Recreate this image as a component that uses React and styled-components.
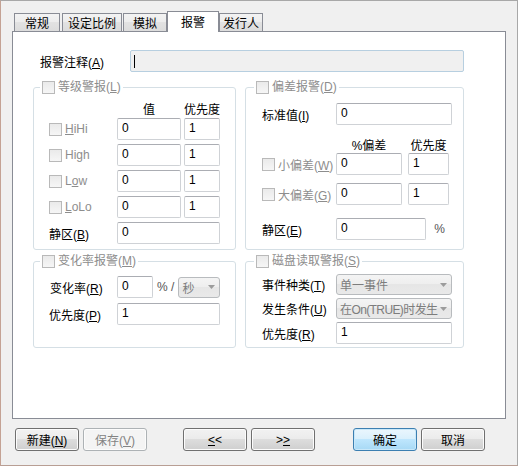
import React from 'react';
import styled, { createGlobalStyle } from 'styled-components';

const Global = createGlobalStyle`
  html, body { margin: 0; padding: 0; background: #f0f0f0; }
  body {
    font-family: "Liberation Sans", "Noto Sans CJK SC", sans-serif;
    font-size: 12px;
    color: #000;
  }
  #root { width: 518px; height: 466px; }
`;

const Window = styled.div`
  box-sizing: border-box;
  width: 518px;
  height: 466px;
  border: 1px solid #a8a8a8;
  border-left-color: #c4a294;
  border-bottom-color: #b89e94;
  background: #f0f0f0;
  padding: 10px 11px 0 11px;
  display: flex;
  flex-direction: column;
`;

const TabStrip = styled.div`
  display: flex;
  align-items: flex-end;
  height: 20px;
  padding-left: 2px;
  position: relative;
  z-index: 1;
`;

const Tab = styled.div`
  box-sizing: border-box;
  width: ${p => p.$w}px;
  margin-right: ${p => p.$mr || 0}px;
  height: ${p => (p.$active ? 21 : 18)}px;
  margin-bottom: ${p => (p.$active ? -1 : 0)}px;
  border: 1px solid #898c95;
  border-bottom: none;
  background: ${p =>
    p.$active ? '#ffffff' : 'linear-gradient(#f3f3f3 0%, #ececec 50%, #e2e2e2 50%, #dcdcdc 100%)'};
  display: flex;
  align-items: center;
  justify-content: center;
  padding-bottom: ${p => (p.$active ? 2 : 0)}px;
  white-space: nowrap;
`;

const Panel = styled.div`
  box-sizing: border-box;
  height: 388px;
  flex: none;
  border: 1px solid #898c95;
  background: #ffffff;
  padding: 18px 0 0 20px;
`;

const CommentRow = styled.div`
  display: flex;
  align-items: center;
  height: 22px;
  margin-left: 7px;
`;

const CommentLabel = styled.div`
  width: 90px;
  white-space: nowrap;
`;

const CommentBox = styled.div`
  box-sizing: border-box;
  width: 334px;
  height: 22px;
  border: 1px solid #b7cfe0;
  border-radius: 2px;
  background: #f0f0f0;
  display: flex;
  align-items: center;
  padding-left: 3px;
`;

const Caret = styled.span`
  width: 1px;
  height: 13px;
  background: #000;
`;

const GroupsGrid = styled.div`
  display: grid;
  grid-template-columns: 203px 219px;
  column-gap: 9px;
  row-gap: 4px;
  margin-top: 8px;
`;

const Group = styled.fieldset`
  margin: 0;
  padding: 0;
  min-width: 0;
  border: 1px solid #d5dfe5;
  border-radius: 3px;
`;

const Legend = styled.legend`
  margin-left: ${p => p.$ml || 6}px;
  padding: 0 2px;
  height: 14px;
  line-height: 14px;
  display: flex;
  align-items: center;
  gap: 3px;
  color: #8d8d8d;
  white-space: nowrap;
`;

const Body = styled.div`
  display: flex;
  flex-direction: column;
  padding: ${p => p.$pad};
`;

const Row = styled.div`
  display: grid;
  grid-template-columns: ${p => p.$cols};
  column-gap: ${p => p.$gap}px;
  height: ${p => p.$h}px;
  margin-top: ${p => p.$mt || 0}px;
  align-items: center;
`;

const CheckBox = styled.span`
  box-sizing: border-box;
  flex: none;
  width: 13px;
  height: 13px;
  border: 1px solid #b9b9b9;
  background: linear-gradient(#eaeaea, #f6f6f6);
`;

const CheckLabel = styled.div`
  display: flex;
  align-items: center;
  gap: 3px;
  color: #8d8d8d;
  white-space: nowrap;
`;

const Label = styled.div`
  white-space: nowrap;
  padding-left: ${p => p.$pl || 0}px;
`;

const Head = styled.div`
  text-align: center;
  white-space: nowrap;
`;

const Key = styled.span`
  text-decoration: underline;
`;

const Field = styled.div`
  box-sizing: border-box;
  height: ${p => p.$h || 22}px;
  width: ${p => (p.$w ? `${p.$w}px` : 'auto')};
  grid-column: ${p => p.$span || 'auto'};
  border: 1px solid #cfd2d6;
  border-top-color: #abadb3;
  border-radius: 2px;
  background: #ffffff;
  padding: 2px 4px;
  line-height: 15px;
  white-space: nowrap;
`;

const Inline = styled.div`
  display: flex;
  align-items: center;
  grid-column: ${p => p.$span || 'auto'};
`;

const Unit = styled.span`
  color: #555;
  margin: 0 ${p => p.$mr || 4}px 0 ${p => p.$ml || 4}px;
  white-space: nowrap;
`;

const Select = styled.div`
  box-sizing: border-box;
  height: ${p => p.$h || 21}px;
  width: ${p => (p.$w ? `${p.$w}px` : 'auto')};
  grid-column: ${p => p.$span || 'auto'};
  border: 1px solid #b8bbbe;
  border-radius: 3px;
  background: linear-gradient(#f4f4f4 0%, #eeeeee 50%, #e6e6e6 50%, #e9e9e9 100%);
  color: #7d7d7d;
  display: flex;
  align-items: center;
  padding: 0 4px 0 3px;
  gap: 1px;
  overflow: hidden;
`;

const SelectText = styled.span`
  flex: 1;
  min-width: 0;
  white-space: nowrap;
  overflow: hidden;
  letter-spacing: ${p => p.$ls || 0}px;
`;

const ButtonBar = styled.div`
  display: flex;
  margin-top: 9px;
  padding-left: 3px;
`;

const ButtonGroup = styled.div`
  display: flex;
  gap: 4px;
  margin-left: ${p => p.$ml || 0}px;
`;

const Button = styled.button`
  box-sizing: border-box;
  width: 64px;
  height: 23px;
  padding: 0;
  border: 1px solid ${p => (p.$default ? '#3c7fb1' : p.disabled ? '#adb2b5' : '#707070')};
  border-radius: 3px;
  background: ${p =>
    p.disabled
      ? '#f4f4f4'
      : p.$default
      ? 'linear-gradient(#eaf6fd 0%, #d9f0fc 50%, #bee6fd 50%, #a7d9f5 100%)'
      : 'linear-gradient(#f2f2f2 0%, #ebebeb 50%, #dddddd 50%, #cfcfcf 100%)'};
  box-shadow: ${p => (p.$default ? 'inset 0 0 0 1px #c9e8f9' : 'inset 0 0 0 1px #fcfcfc')};
  color: ${p => (p.disabled ? '#838383' : '#000')};
  font-family: "Liberation Sans", "Noto Sans CJK SC", sans-serif;
  font-size: 12px;
`;

const Arrow = () => (
  <svg width="7" height="4" viewBox="0 0 7 4" style={{ flex: 'none' }}>
    <path d="M0 0h7L3.5 4z" fill="#9c9c9c" />
  </svg>
);

const C1 = '65px 64px 36px';
const C2 = '68px 66px 41px';

export default function App() {
  return (
    <>
      <Global />
      <Window>
        <TabStrip>
          <Tab $w={46} $mr={2}>常规</Tab>
          <Tab $w={60} $mr={1}>设定比例</Tab>
          <Tab $w={44}>模拟</Tab>
          <Tab $w={52} $active>报警</Tab>
          <Tab $w={44}>发行人</Tab>
        </TabStrip>
        <Panel>
          <CommentRow>
            <CommentLabel>报警注释(<Key>A</Key>)</CommentLabel>
            <CommentBox><Caret /></CommentBox>
          </CommentRow>
          <GroupsGrid>
            <Group>
              <Legend>
                <CheckBox />
                <span>等级警报(<Key>L</Key>)</span>
              </Legend>
              <Body $pad="6px 0 5px 15px">
                <Row $cols={C1} $gap={3} $h={14}>
                  <span />
                  <Head>值</Head>
                  <Head>优先度</Head>
                </Row>
                <Row $cols={C1} $gap={3} $h={22} $mt={4}>
                  <CheckLabel><CheckBox /><span><Key>H</Key>iHi</span></CheckLabel>
                  <Field>0</Field>
                  <Field>1</Field>
                </Row>
                <Row $cols={C1} $gap={3} $h={22} $mt={4}>
                  <CheckLabel><CheckBox /><span>Hi<Key>g</Key>h</span></CheckLabel>
                  <Field>0</Field>
                  <Field>1</Field>
                </Row>
                <Row $cols={C1} $gap={3} $h={22} $mt={4}>
                  <CheckLabel><CheckBox /><span>L<Key>o</Key>w</span></CheckLabel>
                  <Field>0</Field>
                  <Field>1</Field>
                </Row>
                <Row $cols={C1} $gap={3} $h={22} $mt={4}>
                  <CheckLabel><CheckBox /><span><Key>L</Key>oLo</span></CheckLabel>
                  <Field>0</Field>
                  <Field>1</Field>
                </Row>
                <Row $cols={C1} $gap={3} $h={22} $mt={4}>
                  <Label>静区(<Key>B</Key>)</Label>
                  <Field $span="2 / 4">0</Field>
                </Row>
              </Body>
            </Group>

            <Group>
              <Legend $ml={8}>
                <CheckBox />
                <span>偏差报警(<Key>D</Key>)</span>
              </Legend>
              <Body $pad="9px 0 9px 16px">
                <Row $cols={C2} $gap={6} $h={22}>
                  <Label>标准值(<Key>I</Key>)</Label>
                  <Field $span="2 / 4" $w={116}>0</Field>
                </Row>
                <Row $cols={C2} $gap={6} $h={14} $mt={11}>
                  <span />
                  <Head>%偏差</Head>
                  <Head>优先度</Head>
                </Row>
                <Row $cols={C2} $gap={6} $h={22} $mt={3}>
                  <CheckLabel><CheckBox /><span>小偏差(<Key>W</Key>)</span></CheckLabel>
                  <Field>0</Field>
                  <Field>1</Field>
                </Row>
                <Row $cols={C2} $gap={6} $h={22} $mt={8}>
                  <CheckLabel><CheckBox /><span>大偏差(<Key>G</Key>)</span></CheckLabel>
                  <Field>0</Field>
                  <Field>1</Field>
                </Row>
                <Row $cols={C2} $gap={6} $h={22} $mt={13}>
                  <Label>静区(<Key>E</Key>)</Label>
                  <Inline $span="2 / 4">
                    <Field $w={97}>0</Field>
                    <Unit $ml={8}>%</Unit>
                  </Inline>
                </Row>
              </Body>
            </Group>

            <Group>
              <Legend>
                <CheckBox />
                <span>变化率报警(<Key>M</Key>)</span>
              </Legend>
              <Body $pad="8px 0 22px 15px">
                <Row $cols={C1} $gap={3} $h={22}>
                  <Label $pl={1}>变化率(<Key>R</Key>)</Label>
                  <Inline $span="2 / 4">
                    <Field $w={38}>0</Field>
                    <Unit $ml={4} $mr={4}>% /</Unit>
                    <Select $w={44} $h={21}>
                      <SelectText>秒</SelectText>
                      <Arrow />
                    </Select>
                  </Inline>
                </Row>
                <Row $cols={C1} $gap={3} $h={22} $mt={5}>
                  <Label>优先度(<Key>P</Key>)</Label>
                  <Field $span="2 / 4">1</Field>
                </Row>
              </Body>
            </Group>

            <Group>
              <Legend $ml={8}>
                <CheckBox />
                <span>磁盘读取警报(<Key>S</Key>)</span>
              </Legend>
              <Body $pad="6px 0 3px 16px">
                <Row $cols={C2} $gap={6} $h={21}>
                  <Label>事件种类(<Key>T</Key>)</Label>
                  <Select $span="2 / 4" $w={116}>
                    <SelectText>单一事件</SelectText>
                    <Arrow />
                  </Select>
                </Row>
                <Row $cols={C2} $gap={6} $h={21} $mt={3}>
                  <Label>发生条件(<Key>U</Key>)</Label>
                  <Select $span="2 / 4" $w={116}>
                    <SelectText $ls={-0.6}>在On(TRUE)时发生</SelectText>
                    <Arrow />
                  </Select>
                </Row>
                <Row $cols={C2} $gap={6} $h={22} $mt={3}>
                  <Label>优先度(<Key>R</Key>)</Label>
                  <Field $span="2 / 4" $w={116}>1</Field>
                </Row>
              </Body>
            </Group>
          </GroupsGrid>
        </Panel>
        <ButtonBar>
          <ButtonGroup>
            <Button>新建(<Key>N</Key>)</Button>
            <Button disabled>保存(<Key>V</Key>)</Button>
          </ButtonGroup>
          <ButtonGroup $ml={36}>
            <Button><Key>&lt;</Key>&lt;</Button>
            <Button>&gt;<Key>&gt;</Key></Button>
          </ButtonGroup>
          <ButtonGroup $ml={38}>
            <Button $default>确定</Button>
            <Button>取消</Button>
          </ButtonGroup>
        </ButtonBar>
      </Window>
    </>
  );
}
